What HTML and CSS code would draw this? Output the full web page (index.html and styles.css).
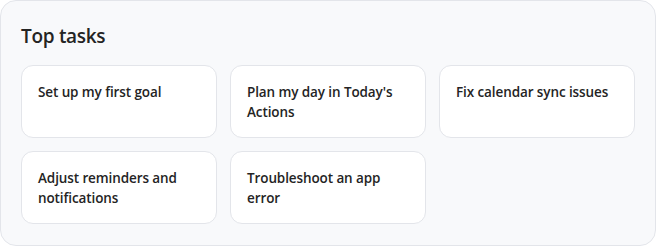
FILE: index.html
```html
<!DOCTYPE html>
<html lang="en">
<head>
    <meta charset="UTF-8" />
    <meta name="viewport" content="width=device-width, initial-scale=1" />
    <title>Top tasks</title>
    <link rel="stylesheet" href="styles.css">
</head>
<body>
    <section class="panel">
        <h2 class="panel-title">Top tasks</h2>
        <div class="task-grid">
            <a href="#" class="task-card">Set up my first goal</a>
            <a href="#" class="task-card">Plan my day in Today's Actions</a>
            <a href="#" class="task-card">Fix calendar sync issues</a>
            <a href="#" class="task-card">Adjust reminders and notifications</a>
            <a href="#" class="task-card">Troubleshoot an app error</a>
        </div>
    </section>
</body>
</html>
```

FILE: styles.css
```css
* {
    margin: 0;
    padding: 0;
    box-sizing: border-box;
    font-family: 'Open Sans', 'Noto Sans', sans-serif;
}
body {
    width: 656px;
    height: 246px;
    background: #ffffff;
}
.panel {
    width: 656px;
    height: 246px;
    background: #f8f9fb;
    border: 1px solid #e3e5ea;
    border-radius: 16px;
    padding: 20px 20px 0 20px;
}
.panel-title {
    font-size: 19px;
    line-height: 30px;
    font-weight: 600;
    letter-spacing: -0.3px;
    color: #242424;
    margin-bottom: 14px;
}
.task-grid {
    display: grid;
    grid-template-columns: repeat(3, 1fr);
    gap: 13px;
}
.task-card {
    display: block;
    height: 73px;
    background: #ffffff;
    border: 1px solid #e3e5ea;
    border-radius: 12px;
    padding: 16px 16px;
    font-size: 13.5px;
    line-height: 20px;
    font-weight: 600;
    letter-spacing: -0.1px;
    color: #242424;
    text-decoration: none;
}
```
